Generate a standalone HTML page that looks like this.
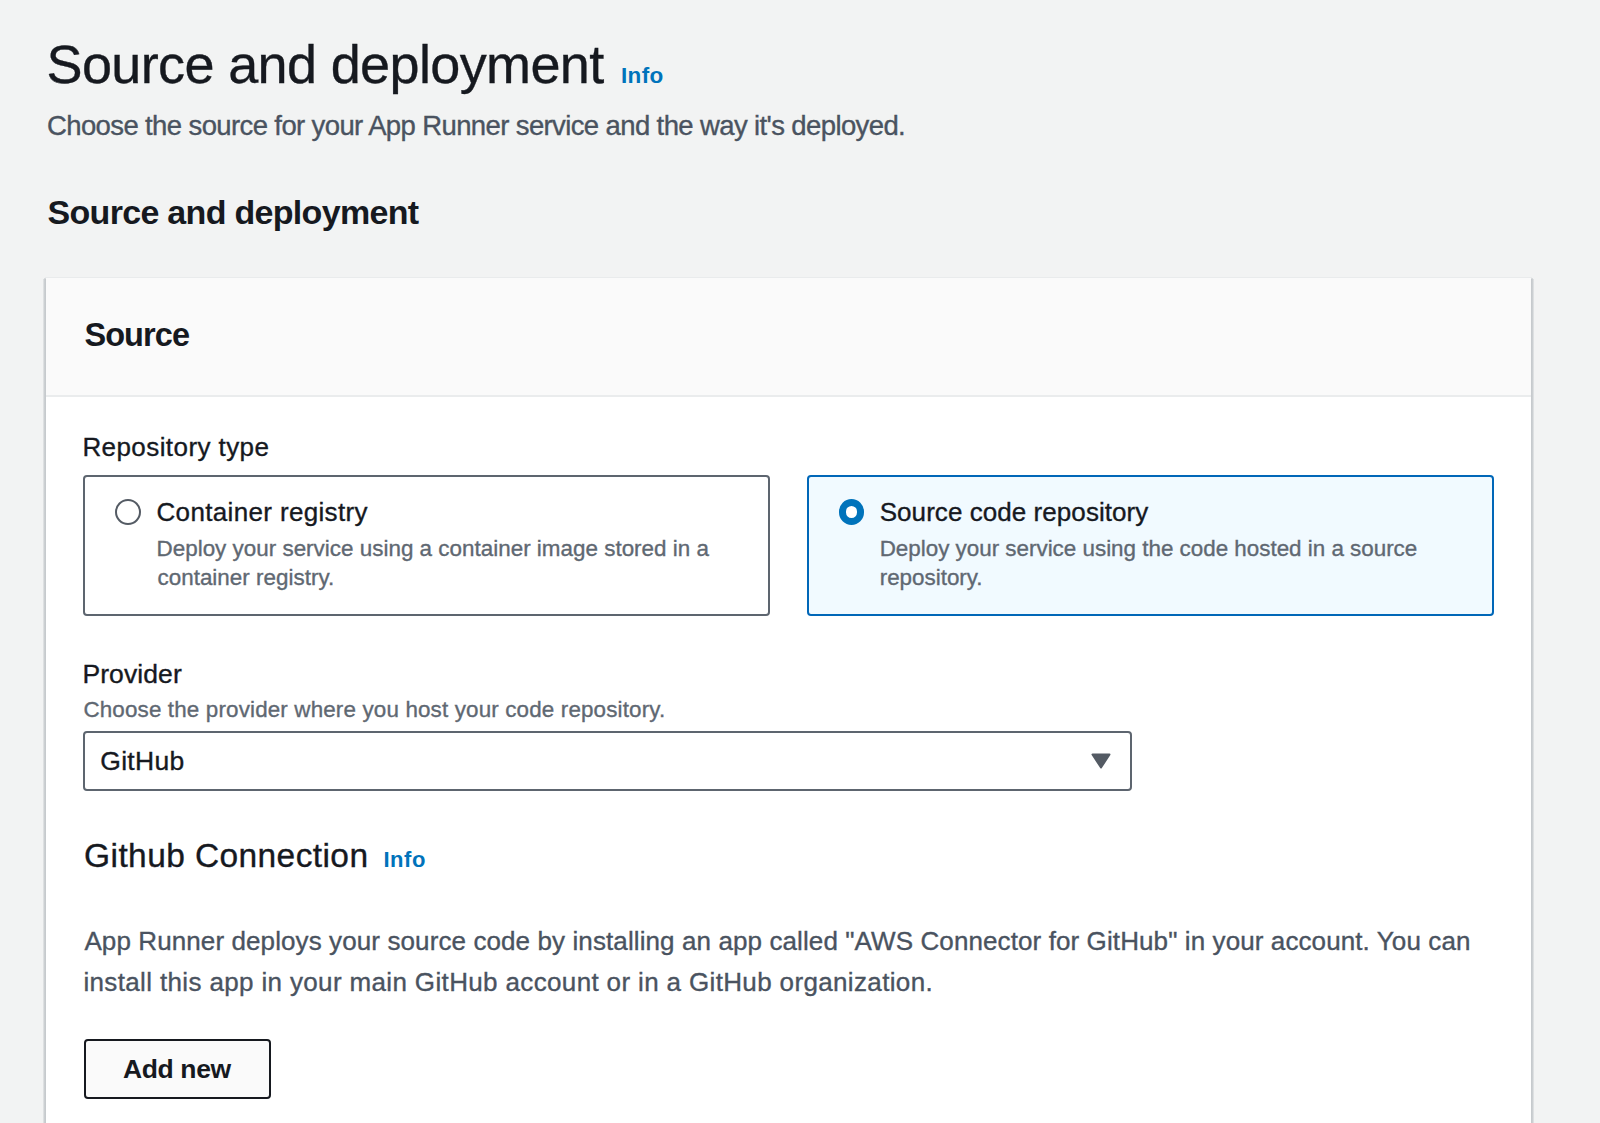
<!DOCTYPE html>
<html><head><meta charset="utf-8"><style>
html,body{margin:0;padding:0;}
body{width:1600px;height:1123px;overflow:hidden;background:#f2f3f3;position:relative;font-family:"Liberation Sans",sans-serif;}
.t{position:absolute;white-space:nowrap;-webkit-text-stroke:0.35px currentColor;}
.card{position:absolute;left:46px;top:278px;width:1485px;height:900px;background:#fff;
  }
.chead{position:absolute;left:0;top:0;right:0;height:117px;background:#fafafa;border-bottom:2px solid #eaeced;}
.b{position:absolute;box-sizing:border-box;border-radius:4px;}
.rcard{top:475px;width:687px;height:141px;border:2px solid #5d656f;background:#fff;}
.rsel{border-color:#0067b8;background:#f1faff;}
.radio{position:absolute;top:499.1px;width:22px;height:22px;border:2px solid #545b64;border-radius:50%;background:#fff;}
.radio.on{border:7.25px solid #0073bb;width:11.5px;height:11.5px;}
.select{left:83px;top:731px;width:1049px;height:60px;border:2px solid #5d656f;background:#fff;}
.btn{left:84px;top:1039px;width:187px;height:60px;border:2px solid #16191f;background:#fafafa;}
</style></head><body>
<div class="card"><div class="chead"></div></div>
<div style="position:absolute;left:43px;top:279px;width:3px;height:900px;background:linear-gradient(to right,#e6e8e9 0%,#c9cdd0 55%,#c4c8cb 100%)"></div>
<div style="position:absolute;left:1531px;top:279px;width:3px;height:900px;background:linear-gradient(to right,#c4c8cb 0%,#c9cdd0 45%,#e6e8e9 100%)"></div>
<div style="position:absolute;left:45px;top:277px;width:1487px;height:1px;background:#e9ebec"></div>
<div style="position:absolute;left:44px;top:278px;width:2px;height:1px;background:#d8dbdd"></div>
<div style="position:absolute;left:1531px;top:278px;width:2px;height:1px;background:#d8dbdd"></div>
<div class="b rcard" style="left:83px"></div>
<div class="b rcard rsel" style="left:807px"></div>
<div class="radio" style="left:115px"></div>
<div class="radio on" style="left:838.8px"></div>
<div class="b select"></div>
<svg style="position:absolute;left:1091px;top:753px" width="20" height="16" viewBox="0 0 20 16"><path d="M1.5 1.5 L18.5 1.5 L10 14.5 Z" fill="#545b64" stroke="#545b64" stroke-width="2" stroke-linejoin="round"/></svg>
<div class="b btn"></div>
<div class="t" style="left:46.50px;top:30.00px;font-size:54px;line-height:68px;color:#16191f;letter-spacing:-0.634px">Source and deployment</div>
<div class="t" style="left:621.10px;top:61.80px;font-size:22.5px;line-height:28px;color:#0073bb;font-weight:700;-webkit-text-stroke:0;letter-spacing:0.271px">Info</div>
<div class="t" style="left:47.00px;top:108.90px;font-size:27.5px;line-height:34px;color:#4a5360;letter-spacing:-0.618px">Choose the source for your App Runner service and the way it's deployed.</div>
<div class="t" style="left:47.50px;top:190.75px;font-size:34px;line-height:42px;color:#16191f;font-weight:700;-webkit-text-stroke:0;letter-spacing:-0.692px">Source and deployment</div>
<div class="t" style="left:84.40px;top:314.70px;font-size:32.5px;line-height:41px;color:#16191f;font-weight:700;-webkit-text-stroke:0;letter-spacing:-0.921px">Source</div>
<div class="t" style="left:82.40px;top:431.00px;font-size:26px;line-height:32px;color:#16191f;letter-spacing:0.423px">Repository type</div>
<div class="t" style="left:156.50px;top:495.90px;font-size:26px;line-height:32px;color:#16191f;letter-spacing:0.342px">Container registry</div>
<div class="t" style="left:156.50px;top:534.50px;font-size:22.4px;line-height:28px;color:#5f6872;letter-spacing:0.020px">Deploy your service using a container image stored in a</div>
<div class="t" style="left:157.50px;top:564.20px;font-size:22.4px;line-height:28px;color:#5f6872;letter-spacing:0.020px">container registry.</div>
<div class="t" style="left:879.70px;top:495.90px;font-size:26px;line-height:32px;color:#16191f;letter-spacing:0.059px">Source code repository</div>
<div class="t" style="left:879.70px;top:534.50px;font-size:22.4px;line-height:28px;color:#5f6872;letter-spacing:-0.002px">Deploy your service using the code hosted in a source</div>
<div class="t" style="left:879.70px;top:564.20px;font-size:22.4px;line-height:28px;color:#5f6872;letter-spacing:-0.002px">repository.</div>
<div class="t" style="left:82.40px;top:657.90px;font-size:26.5px;line-height:33px;color:#16191f;letter-spacing:0.093px">Provider</div>
<div class="t" style="left:83.40px;top:696.40px;font-size:22.4px;line-height:28px;color:#5f6872;letter-spacing:0.154px">Choose the provider where you host your code repository.</div>
<div class="t" style="left:100.30px;top:744.50px;font-size:26.5px;line-height:33px;color:#16191f;letter-spacing:0.272px">GitHub</div>
<div class="t" style="left:84.10px;top:834.60px;font-size:33.5px;line-height:42px;color:#16191f;letter-spacing:0.403px">Github Connection</div>
<div class="t" style="left:383.40px;top:845.50px;font-size:22px;line-height:28px;color:#0073bb;font-weight:700;-webkit-text-stroke:0;letter-spacing:0.574px">Info</div>
<div class="t" style="left:84.40px;top:925.00px;font-size:26px;line-height:32px;color:#4a5360;letter-spacing:0.100px">App Runner deploys your source code by installing an app called &quot;AWS Connector for GitHub&quot; in your account. You can</div>
<div class="t" style="left:83.40px;top:966.25px;font-size:26px;line-height:32px;color:#4a5360;letter-spacing:0.355px">install this app in your main GitHub account or in a GitHub organization.</div>
<div class="t" style="left:122.90px;top:1052.80px;font-size:26.5px;line-height:33px;color:#16191f;font-weight:700;-webkit-text-stroke:0;letter-spacing:-0.350px">Add new</div>
</body></html>
